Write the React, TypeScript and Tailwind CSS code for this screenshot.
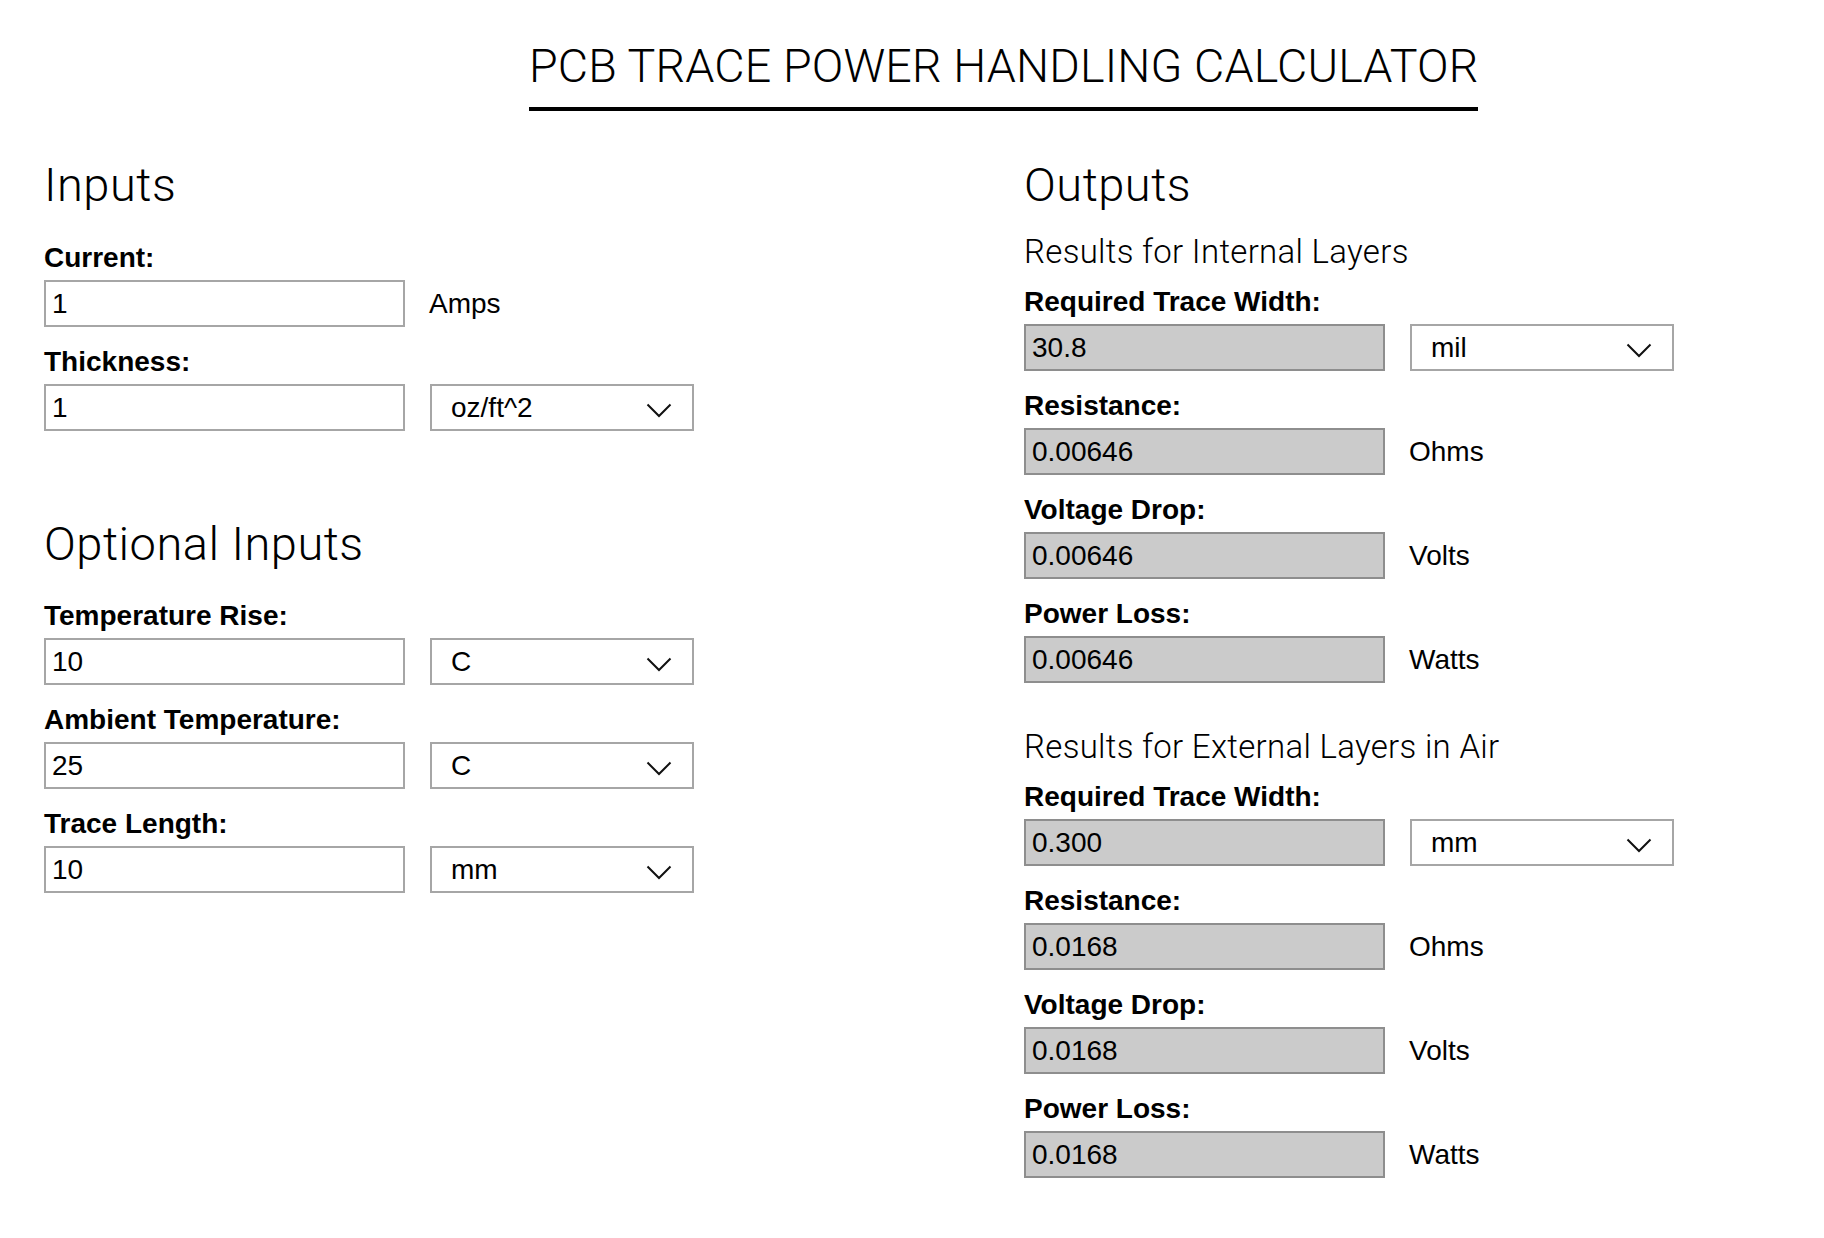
import React from "react";

const sans = "font-['Liberation_Sans',Arial,Helvetica,sans-serif]";
const din = "font-['Roboto','DejaVu_Sans',sans-serif]";

function Chevron() {
  return (
    <svg width="26" height="15" viewBox="0 0 26 15" className="mt-[6px]">
      <polyline points="1.5,1.5 13,13 24.5,1.5" fill="none" stroke="#111" strokeWidth="2" />
    </svg>
  );
}

function Select({ value }: { value: string }) {
  return (
    <div className={`ml-[25px] w-[264px] h-[47px] border-2 border-[#a6a6a6] bg-white flex items-center justify-between pl-[19px] pr-[20px] text-[28px] text-black ${sans}`}>
      <span>{value}</span>
      <Chevron />
    </div>
  );
}

function Unit({ text }: { text: string }) {
  return <div className={`ml-[24px] text-[28px] text-black ${sans}`}>{text}</div>;
}

function Field({
  label,
  value,
  output,
  select,
  unit,
  first,
}: {
  label: string;
  value: string;
  output?: boolean;
  select?: string;
  unit?: string;
  first?: boolean;
}) {
  return (
    <div className={first ? "" : "mt-[19px]"}>
      <div className={`h-[32px] leading-[32px] text-[28px] font-bold text-black ${sans}`}>{label}</div>
      <div className="mt-[6px] flex items-center">
        <div
          className={`w-[361px] h-[47px] border-2 flex items-center pl-[6px] text-[28px] text-black ${sans} ${
            output ? "bg-[#cbcbcb] border-[#8e8e8e]" : "bg-white border-[#a6a6a6]"
          }`}
        >
          {value}
        </div>
        {select ? <Select value={select} /> : null}
        {unit ? <Unit text={unit} /> : null}
      </div>
    </div>
  );
}

function Heading({ children, className = "" }: { children: React.ReactNode; className?: string }) {
  return (
    <h2 className={`text-[47px] leading-[56px] font-light tracking-[0.5px] text-black ${din} ${className}`}>{children}</h2>
  );
}

function SubHeading({ children, className = "" }: { children: React.ReactNode; className?: string }) {
  return (
    <h3 className={`text-[33px] leading-[40px] font-light tracking-[0.3px] text-black ${din} ${className}`}>{children}</h3>
  );
}

export default function App() {
  return (
    <div className="w-full min-h-screen bg-white text-black">
      <div className="pt-[38px] pl-[529px]">
        <h1
          className={`inline-block border-b-4 border-black pb-[13px] text-[46.6px] leading-[56px] font-light tracking-[0.15px] ${din}`}
        >
          PCB TRACE POWER HANDLING CALCULATOR
        </h1>
      </div>

      <div className="flex mt-[46px] pl-[44px]">
        <div className="w-[980px]">
          <Heading>Inputs</Heading>
          <div className="mt-[29px]">
            <Field first label="Current:" value="1" unit="Amps" />
            <Field label="Thickness:" value="1" select="oz/ft^2" />
          </div>

          <Heading className="mt-[85px]">Optional Inputs</Heading>
          <div className="mt-[28px]">
            <Field first label="Temperature Rise:" value="10" select="C" />
            <Field label="Ambient Temperature:" value="25" select="C" />
            <Field label="Trace Length:" value="10" select="mm" />
          </div>
        </div>

        <div className="flex-1">
          <Heading>Outputs</Heading>
          <SubHeading className="mt-[19px]">Results for Internal Layers</SubHeading>
          <div className="mt-[14px]">
            <Field first output label="Required Trace Width:" value="30.8" select="mil" />
            <Field output label="Resistance:" value="0.00646" unit="Ohms" />
            <Field output label="Voltage Drop:" value="0.00646" unit="Volts" />
            <Field output label="Power Loss:" value="0.00646" unit="Watts" />
          </div>

          <SubHeading className="mt-[44px]">Results for External Layers in Air</SubHeading>
          <div className="mt-[14px] pb-[60px]">
            <Field first output label="Required Trace Width:" value="0.300" select="mm" />
            <Field output label="Resistance:" value="0.0168" unit="Ohms" />
            <Field output label="Voltage Drop:" value="0.0168" unit="Volts" />
            <Field output label="Power Loss:" value="0.0168" unit="Watts" />
          </div>
        </div>
      </div>
    </div>
  );
}
